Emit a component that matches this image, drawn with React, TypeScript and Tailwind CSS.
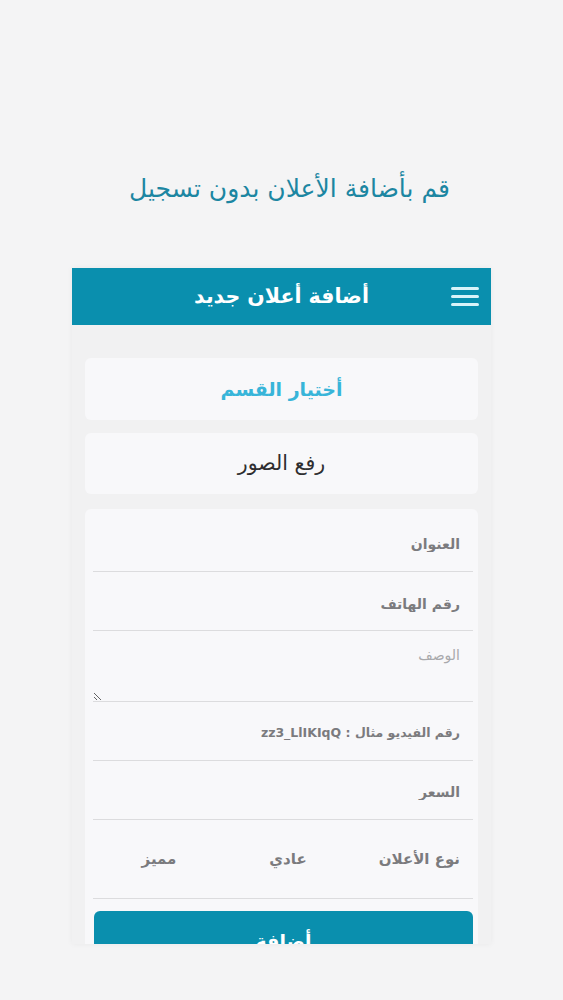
import React from "react";

const font = { fontFamily: '"DejaVu Sans", "Noto Sans", sans-serif' };

function Row({ label, h, size }: { label: string; h: string; size?: string }) {
  return (
    <div className={`flex items-center border-b border-[#dcdcde] ${h}`}>
      <input
        dir="rtl"
        placeholder={label}
        className={`w-full bg-transparent pr-[13px] font-bold text-[#6f6f72] outline-none placeholder:text-[#7b7b7e] ${size ?? "text-[14px]"}`}
        style={font}
      />
    </div>
  );
}

export default function App() {
  return (
    <div dir="rtl" className="flex min-h-[1000px] w-full flex-col items-center bg-[#f4f4f5]" style={font}>
      <div className="pl-[16px] pt-[172px] text-[25px] leading-[34px] text-[#1c86a2]">قم بأضافة الأعلان بدون تسجيل</div>
      <div className="mt-[62px] h-[676px] w-[419px] overflow-hidden bg-[#f1f1f2] shadow-[0_0_6px_rgba(0,0,0,0.05)]">
        <div className="grid h-[57px] grid-cols-[1fr_auto_1fr] items-center bg-[#0a8fae] px-[12px]">
          <div className="flex flex-col gap-[5px] justify-self-start">
            <span className="block h-[3px] w-[28px] rounded bg-[#d9f3f9]" />
            <span className="block h-[3px] w-[28px] rounded bg-[#d9f3f9]" />
            <span className="block h-[3px] w-[28px] rounded bg-[#d9f3f9]" />
          </div>
          <div className="text-[20.5px] font-bold text-white">أضافة أعلان جديد</div>
          <div />
        </div>
        <div className="px-[13px] pt-[33px]">
          <div className="flex h-[62px] items-center justify-center rounded-[6px] bg-[#f8f8fa] text-[19px] font-bold text-[#38b5d9]">
            أختيار القسم
          </div>
          <div className="mt-[13px] flex h-[61px] items-center justify-center rounded-[6px] bg-[#f8f8fa] text-[20.5px] text-[#2e2e30]">
            رفع الصور
          </div>
          <div className="mt-[15px] rounded-t-[6px] bg-[#f8f8fa] pl-[8px] pr-[5px]">
            <Row label="العنوان" h="h-[63px] pt-[8px]" />
            <Row label="رقم الهاتف" h="h-[59px] pt-[6px]" />
            <div className="border-b border-[#dcdcde]">
              <textarea
                dir="rtl"
                placeholder="الوصف"
                className="block h-[70px] w-full bg-transparent pr-[13px] pt-[14px] text-[14px] text-[#6f6f72] outline-none placeholder:text-[#a9a9ac]"
                style={font}
              />
            </div>
            <Row label="رقم الفيديو مثال : zz3_LlIKIqQ" h="h-[59px] pt-[4px]" size="text-[12.5px]" />
            <Row label="السعر" h="h-[59px] pt-[4px]" />
            <div className="flex h-[79px] items-center border-b border-[#dcdcde] pr-[13px] text-[15px] font-bold text-[#7b7b7e]">
              <span className="w-[100px]">نوع الأعلان</span>
              <span className="w-[144px] text-center">عادي</span>
              <span className="w-[114px] text-center">مميز</span>
            </div>
            <div className="pt-[12px]">
              <button className="flex h-[60px] w-[379px] items-center justify-center rounded-[6px] bg-[#0a8fae] text-[19px] font-bold text-white" style={font}>
                أضافة
              </button>
            </div>
          </div>
        </div>
      </div>
    </div>
  );
}
